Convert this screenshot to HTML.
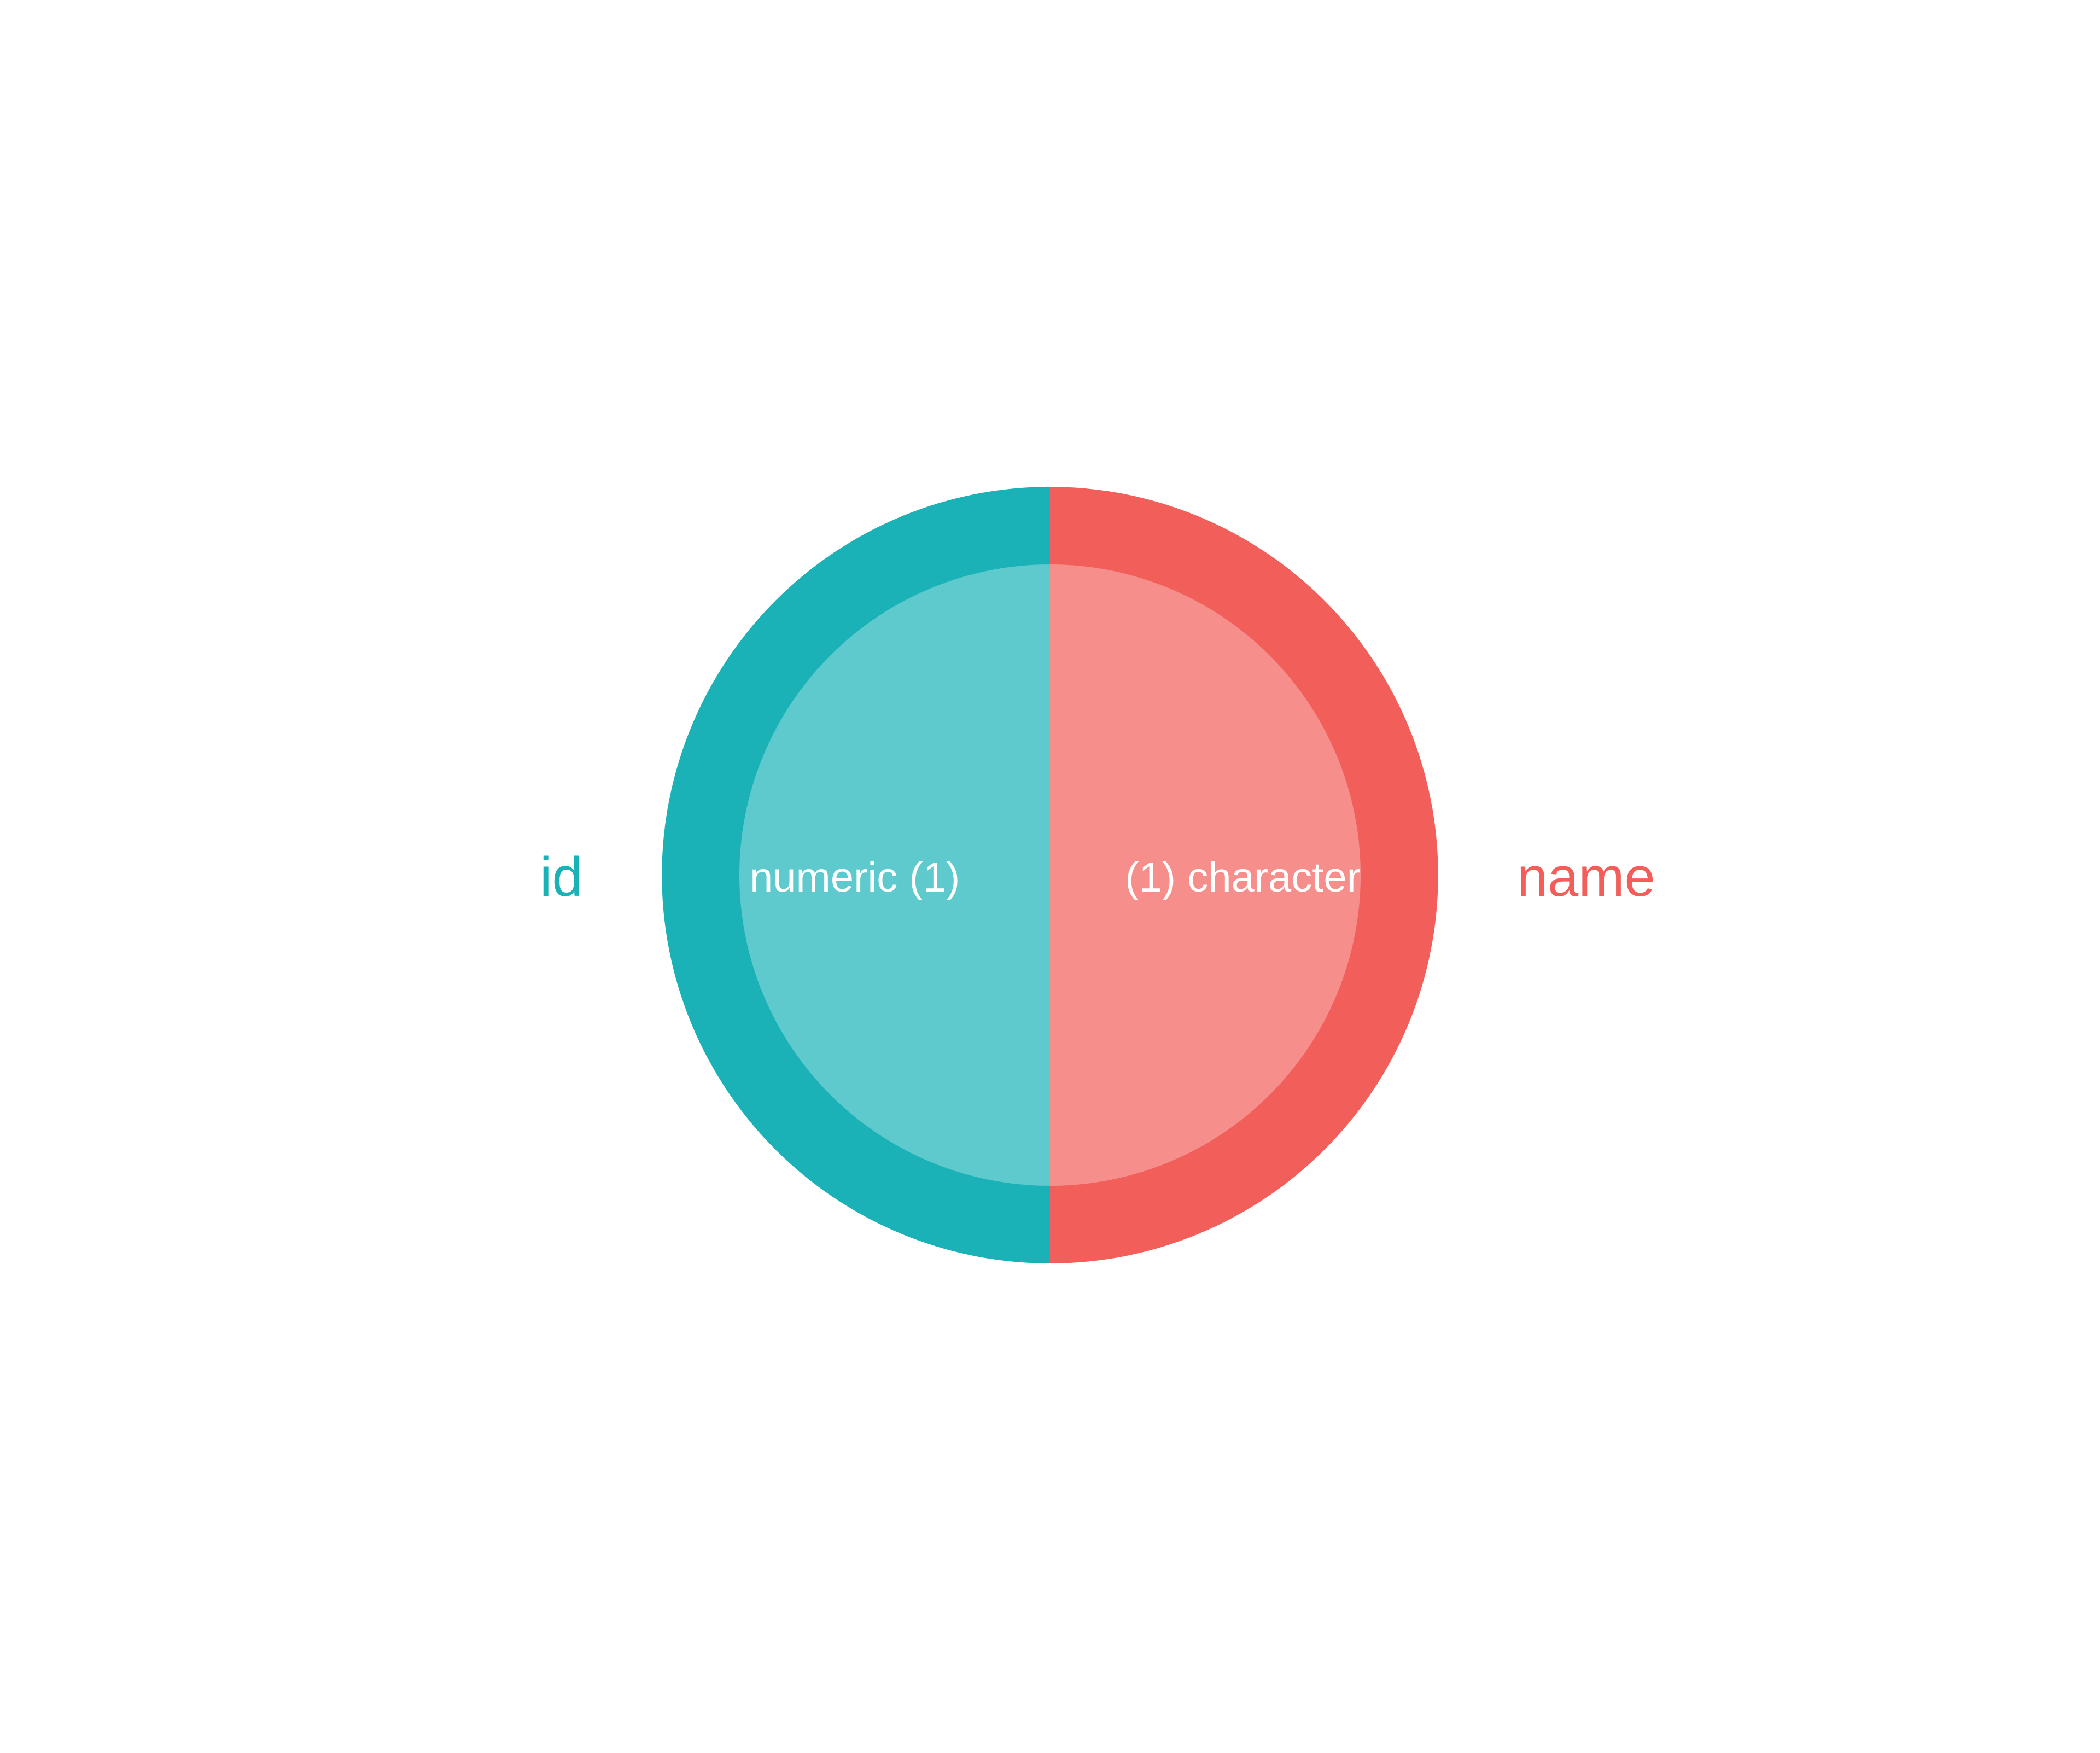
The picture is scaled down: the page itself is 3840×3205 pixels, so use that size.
<!DOCTYPE html>
<html><head><style>html,body{margin:0;padding:0;background:#fff}</style></head>
<body>
<svg width="3840" height="3200" viewBox="0 0 3840 3200" xmlns="http://www.w3.org/2000/svg" font-family="Liberation Sans, Arial, sans-serif">
<rect width="3840" height="3200" fill="#fff"/>
<path d="M1920 890 A710 710 0 0 0 1920 2310 Z" fill="#1AB2B7"/>
<path d="M1920 890 A710 710 0 0 1 1920 2310 Z" fill="#F25F5B"/>
<path d="M1920 1032 A568 568 0 0 0 1920 2168 Z" fill="#5ECACD"/>
<path d="M1920 1032 A568 568 0 0 1 1920 2168 Z" fill="#F68F8B"/>
<text x="987" y="1638" font-size="101" fill="#1AB2B7">id</text>
<text x="2774" y="1638" font-size="101" fill="#F25F5B">name</text>
<text x="1371" y="1630" font-size="76" fill="#fff">numeric (1)</text>
<text x="2488" y="1630" font-size="76" fill="#fff" text-anchor="end">(1) character</text>
</svg>
</body></html>
